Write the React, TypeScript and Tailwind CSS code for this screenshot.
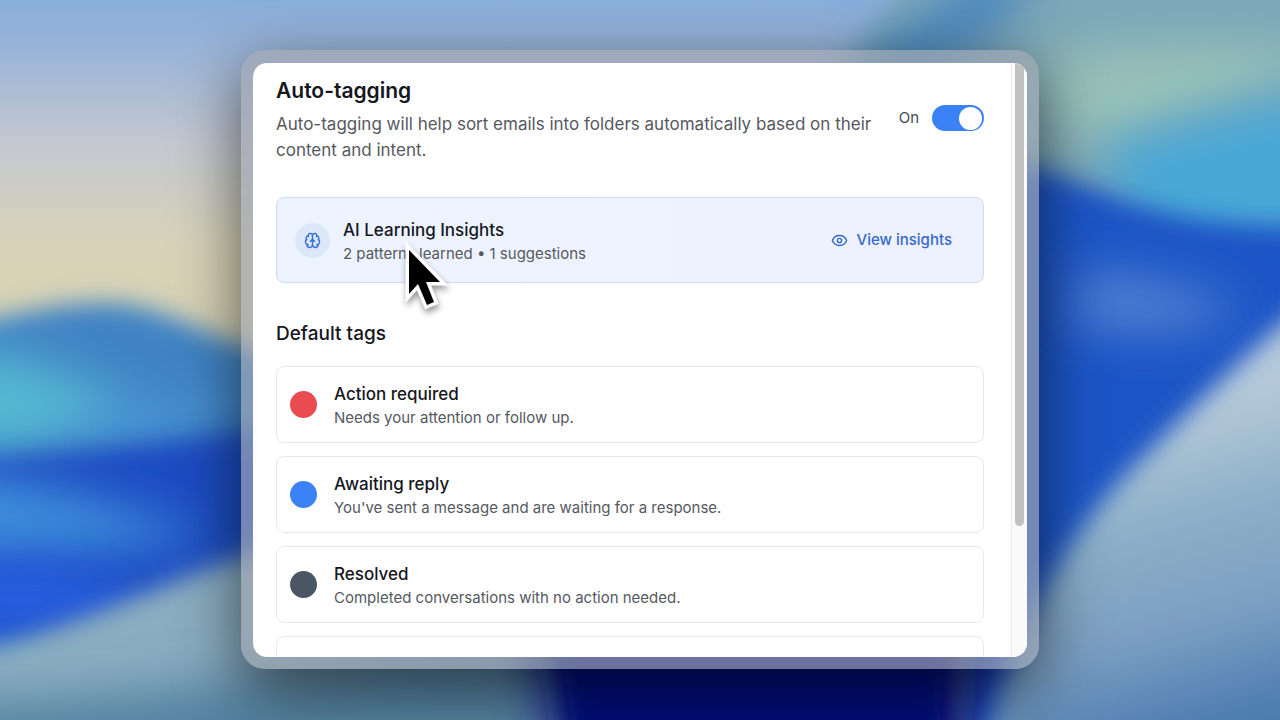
import React, { useState } from 'react';
import { Brain, Eye } from 'lucide-react';

interface Tag {
  id: string;
  name: string;
  description: string;
  color: string;
}

const defaultTags: Tag[] = [
  { id: 'action', name: 'Action required', description: 'Needs your attention or follow up.', color: 'bg-[#e94b4f]' },
  { id: 'awaiting', name: 'Awaiting reply', description: "You've sent a message and are waiting for a response.", color: 'bg-[#3b82f6]' },
  { id: 'resolved', name: 'Resolved', description: 'Completed conversations with no action needed.', color: 'bg-[#4b5563]' },
];

// Soft colour waves behind the window
const Wallpaper: React.FC = () => (
  <svg
    className="absolute inset-0 -z-10 h-full w-full"
    viewBox="0 0 1280 720"
    preserveAspectRatio="xMidYMid slice"
    aria-hidden="true"
  >
    <defs>
      <linearGradient id="sky" x1="0" y1="0" x2="0" y2="1">
        <stop offset="0" stopColor="#8aaedb" />
        <stop offset="0.06" stopColor="#97b3d8" />
        <stop offset="0.2" stopColor="#c4c8d0" />
        <stop offset="0.34" stopColor="#d8d3b8" />
        <stop offset="0.45" stopColor="#d8d3b5" />
      </linearGradient>
      <linearGradient id="light" gradientUnits="userSpaceOnUse" x1="1150" y1="380" x2="1240" y2="720">
        <stop offset="0" stopColor="#b8cadc" />
        <stop offset="0.15" stopColor="#b0c6d6" />
        <stop offset="0.4" stopColor="#8cb0c8" />
        <stop offset="0.7" stopColor="#7b9fc2" />
        <stop offset="1" stopColor="#4b7bb0" />
      </linearGradient>
      <filter id="soft" filterUnits="userSpaceOnUse" x="-200" y="-200" width="1680" height="1120">
        <feGaussianBlur stdDeviation="12" />
      </filter>
      <filter id="softer" filterUnits="userSpaceOnUse" x="-200" y="-200" width="1680" height="1120">
        <feGaussianBlur stdDeviation="24" />
      </filter>
    </defs>
    <rect width="1280" height="720" fill="url(#sky)" />

    <path d="M-80 335 C0 320 50 303 105 303 C170 303 210 345 330 372 V800 H-80Z" fill="#3f83c4" filter="url(#soft)" />
    <path d="M-80 350 C0 345 60 365 130 405 C80 445 0 455 -80 455Z" fill="#54b8d2" filter="url(#softer)" />
    <path d="M100 410 L260 400 L200 430 L60 445Z" fill="#4d9bdc" filter="url(#softer)" />
    <path d="M-80 462 C80 454 160 445 340 415 V640 H-80Z" fill="#1c4cc2" filter="url(#soft)" />
    <path d="M-80 470 C40 475 140 515 210 535 C120 555 0 555 -80 555Z" fill="#4190dc" filter="url(#softer)" />
    <ellipse cx="20" cy="600" rx="110" ry="32" fill="#255fe0" filter="url(#softer)" />
    <path d="M-80 668 C60 640 150 580 330 528 L700 640 V900 H-80Z" fill="#8aadc0" filter="url(#soft)" />
    <path d="M-80 705 C80 700 200 690 400 650 L560 640 V900 H-80Z" fill="#5583a2" filter="url(#softer)" />

    <path d="M800 110 C850 60 890 10 930 -60 H1400 V300 H800Z" fill="#7da7b8" filter="url(#soft)" />
    <path d="M870 75 C920 50 980 20 1010 -30" fill="none" stroke="#3f82c0" strokeWidth="44" filter="url(#softer)" />
    <path d="M1030 60 C1090 45 1180 40 1320 50 L1300 80 C1200 110 1150 140 1060 150Z" fill="#98c1b8" filter="url(#softer)" />
    <path d="M1100 150 C1160 130 1220 110 1400 80 V280 H1150Z" fill="#48a8d6" filter="url(#softer)" />
    <path d="M960 155 C1050 160 1110 202 1180 216 C1230 226 1280 228 1400 226 V900 H960Z" fill="#1f54c6" filter="url(#soft)" />
    <path d="M1080 270 C1160 275 1220 295 1240 310 C1190 340 1130 335 1070 325Z" fill="#5080d2" filter="url(#softer)" />
    <path d="M520 600 L545 690 L580 900 H960 L980 600Z" fill="#00107a" filter="url(#softer)" />
    <path d="M560 640 H940 V900 H600Z" fill="#00107a" filter="url(#soft)" />
    <path d="M1400 226 C1280 320 1205 395 1140 460 C1085 515 1050 570 1020 640 L960 800 H1400Z" fill="url(#light)" filter="url(#soft)" />
  </svg>
);

const Cursor: React.FC = () => (
  <svg
    className="pointer-events-none absolute left-[147px] top-[175px] h-[84px] w-[56px] drop-shadow-[1px_4px_3px_rgba(0,0,0,0.4)]"
    viewBox="0 0 56 84"
    aria-hidden="true"
  >
    <path
      d="M9 12 V56 L18 46 L27 67 L34 64 L26 44 H40Z"
      fill="#000"
      stroke="#fff"
      strokeWidth="7"
      paintOrder="stroke"
    />
  </svg>
);

const TagCard: React.FC<{ tag: Tag }> = ({ tag }) => (
  <li className="flex items-center gap-[17px] rounded-lg border border-[#e8e8ea] px-[13px] pb-3 pt-[11px]">
    <span className={`size-[27px] shrink-0 rounded-full ${tag.color}`} />
    <div className="pt-1">
      <h3 className="text-[17px] leading-6 font-medium text-[#15171e]">{tag.name}</h3>
      <p className="text-[15px] leading-6 text-[#55595f]">{tag.description}</p>
    </div>
  </li>
);

const App: React.FC = () => {
  const [enabled, setEnabled] = useState(true);

  return (
    <div className="relative isolate flex h-screen flex-col items-center overflow-hidden px-4 pb-[51px] pt-[50px] font-['Inter',sans-serif]">
      <Wallpaper />

      <div className="flex min-h-0 w-full max-w-[798px] flex-1 rounded-3xl bg-[#a0a4ae]/67 px-3 pb-3 pt-[13px] shadow-[0_20px_64px_0px_rgba(0,0,0,0.6)]">
        <div className="relative flex flex-1 overflow-hidden rounded-[14px] bg-white">
          <main className="min-w-0 flex-1 overflow-hidden pl-[23px] pr-[27px] pt-3.5">
            <header className="flex items-center justify-between gap-6">
              <div>
                <h1 className="text-[21px] leading-7 font-semibold text-[#15171e]">Auto-tagging</h1>
                <p className="mt-1.5 text-[17px] leading-[26px] text-[#55595f]">
                  Auto-tagging will help sort emails into folders automatically based on their content and intent.
                </p>
              </div>
              <label className="mb-1 flex shrink-0 items-center gap-[13px] text-[15px] leading-6 text-[#45494f]">
                {enabled ? 'On' : 'Off'}
                <input
                  type="checkbox"
                  role="switch"
                  checked={enabled}
                  onChange={(e) => setEnabled(e.target.checked)}
                  className="flex h-[26px] w-[52px] cursor-pointer appearance-none items-center rounded-full bg-gray-300 p-0.5 before:size-[23px] before:rounded-full before:bg-white checked:justify-end checked:bg-[#3b82f6]"
                />
              </label>
            </header>

            <section className="mt-[34px] flex items-center justify-between rounded-lg border border-[#cddcf0] bg-linear-to-r from-[#edf4ff] to-[#edf1fe] py-4 pl-[18px] pr-[31px]">
              <div className="flex items-center gap-[13px]">
                <div className="flex size-[35px] items-center justify-center rounded-full bg-[#dce8f8]">
                  <Brain className="size-[17px] text-[#3470d6]" />
                </div>
                <div className="pt-1">
                  <h2 className="text-[17px] leading-6 font-medium text-[#15171e]">AI Learning Insights</h2>
                  <p className="text-[15px] leading-6 text-[#55595f]">2 patterns learned • 1 suggestions</p>
                </div>
              </div>
              <button className="flex items-center gap-[9px] text-[15px] leading-6 font-medium text-[#3569c9]">
                <Eye className="size-[17px]" />
                View insights
              </button>
            </section>

            <h2 className="mt-[37px] text-[19px] leading-7 font-medium text-[#15171e]">Default tags</h2>
            <ul className="mt-[18px] flex flex-col gap-[13px]">
              {defaultTags.map((tag) => (
                <TagCard key={tag.id} tag={tag} />
              ))}
              <li className="h-[77px] rounded-lg border border-[#e8e8ea]" />
            </ul>
          </main>

          <div className="flex w-4 shrink-0 justify-center border-l border-[#ececec] bg-[#fafafa]">
            <div className="h-[78%] w-[9px] rounded-b-full bg-[#c1c1c1]" />
          </div>

          <Cursor />
        </div>
      </div>
    </div>
  );
};

export default App;
